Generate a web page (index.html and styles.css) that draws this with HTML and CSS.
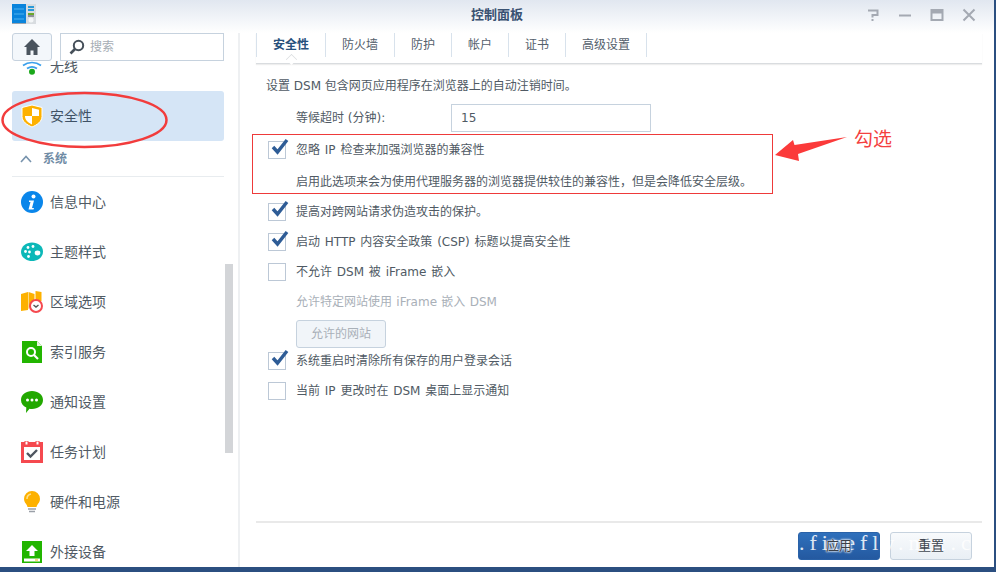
FILE: index.html
```html
<!DOCTYPE html>
<html lang="zh-CN">
<head>
<meta charset="utf-8">
<title>控制面板</title>
<link rel="stylesheet" href="styles.css">
</head>
<body>
<div class="window">
  <header class="titlebar">
    <svg class="logo" width="24" height="20" viewBox="0 0 24 20"><rect width="14" height="19" fill="#0a84dc"/><path d="M2 5h10M2 10h10M2 15h10" stroke="#4fb2ee" stroke-width="1"/><rect x="14" width="10" height="20" fill="#d8dce0"/><rect y="19" width="14" height="1" fill="#9aa4ae"/><rect x="16" y="2" width="6" height="2" fill="#2a9ad8"/><rect x="16" y="5" width="6" height="2" fill="#2a9ad8"/><rect x="16" y="9" width="6" height="2" fill="#6aa82a"/><rect x="16" y="11.500" width="6" height="1" fill="#445"/><circle cx="19" cy="16" r="2.500" fill="#f4f6f8"/></svg>
    <div class="title">控制面板</div>
    <div class="winbtns">
      <svg width="14" height="14" viewBox="0 0 14 14"><path d="M2 2.500h9.500v4.500H6.500v2.500M6.500 11v2" fill="none" stroke="#a4a9b2" stroke-width="2"/></svg>
      <svg width="14" height="14" viewBox="0 0 14 14"><path d="M1 7.500h12" stroke="#a4a9b2" stroke-width="2"/></svg>
      <svg width="14" height="14" viewBox="0 0 14 14"><path d="M1.500 2h11v10h-11z" fill="none" stroke="#a4a9b2" stroke-width="2"/><path d="M1 4h12" stroke="#a4a9b2" stroke-width="3"/></svg>
      <svg width="14" height="14" viewBox="0 0 14 14"><path d="M1.500 1.500l11 11M12.500 1.500l-11 11" stroke="#a4a9b2" stroke-width="2"/></svg>
    </div>
  </header>
  <div class="content">
    <aside class="sidebar">
      <div class="tools">
        <button class="home"><svg width="16" height="16" viewBox="0 0 16 16"><path d="M8 0L0 8h2.500v8h4v-4.500h3V16h4V8H16z" fill="#4a545e"/></svg></button>
        <div class="search"><svg width="16" height="16" viewBox="0 0 16 16"><circle cx="9.500" cy="6.500" r="4.700" fill="none" stroke="#46505a" stroke-width="2"/><path d="M6 10l-4.500 4.500" stroke="#46505a" stroke-width="2.600"/></svg><span>搜索</span></div>
      </div>
      <div class="navclip">
        <nav class="nav">
          <a class="item first"><svg class="ico" width="22" height="22" viewBox="0 0 22 22"><path d="M2 10.500a15 15 0 0 1 18 0M6 13.500a9 9 0 0 1 10 0" fill="none" stroke="#3aa0ec" stroke-width="1.700"/><circle cx="11" cy="16.700" r="3" fill="#1aa81a"/></svg>无线</a>
          <a class="item active"><svg class="ico" width="22" height="24" viewBox="0 0 22 24"><path d="M11 1l10 2.500v9c0 5-5 8.500-10 10.500C6 21 1 17.500 1 12.500v-9z" fill="#fdb100" stroke="#fff" stroke-width="1"/><path d="M11 4l7 1.800V12h-7zM11 12v8.500C7.500 19 4 16 4 12.500V12z" fill="#fff"/></svg>安全性</a>
          <div class="group"><svg width="12" height="8" viewBox="0 0 12 8"><path d="M1 7l5-5.500L11 7" fill="none" stroke="#7793ad" stroke-width="1.600"/></svg>系统</div>
          <a class="item"><svg class="ico" width="22" height="22" viewBox="0 0 22 22"><circle cx="11" cy="11" r="11" fill="#0a86ea"/><circle cx="12.500" cy="5.500" r="2" fill="#fff"/><path d="M8 9.500h5l-2 7.500h2l-.5 1.500h-5l2-7.500H8z" fill="#fff"/></svg>信息中心</a>
          <a class="item"><svg class="ico" width="22" height="22" viewBox="0 0 22 22"><path d="M11 1.500c6 0 11 3.500 11 9 0 6-5.500 9.500-11 9.500S0 16.500 0 11C0 5.500 5 1.500 11 1.500z" fill="#0cb8b8"/><circle cx="7" cy="6.500" r="1.400" fill="#fff"/><circle cx="12" cy="5.500" r="1.400" fill="#fff"/><circle cx="4.500" cy="10.500" r="1.400" fill="#fff"/><circle cx="8.500" cy="11" r="1.400" fill="#fff"/><circle cx="7.500" cy="15.500" r="1.400" fill="#fff"/><ellipse cx="16.500" cy="12" rx="2.800" ry="2.400" fill="#fff"/></svg>主题样式</a>
          <a class="item"><svg class="ico" width="22" height="22" viewBox="0 0 22 22"><path d="M0 3l7-2v18l-7 1zM7.500 1l6 2v6l-6 9zM14.500 0l6 1v9h-6z" fill="#fdb100"/><circle cx="15" cy="15" r="6" fill="#fff" stroke="#f5494f" stroke-width="2"/><path d="M12.500 14l2.500 2 2.500-2" fill="none" stroke="#555" stroke-width="1.400"/></svg>区域选项</a>
          <a class="item"><svg class="ico" width="22" height="22" viewBox="0 0 22 22"><path d="M1 0h15l5 5v17H1z" fill="#22b500"/><path d="M16 0v5h5z" fill="#e6f6e0"/><circle cx="10" cy="11" r="4" fill="none" stroke="#fff" stroke-width="2"/><path d="M13 14l4 4" stroke="#fff" stroke-width="2.200"/></svg>索引服务</a>
          <a class="item"><svg class="ico" width="22" height="22" viewBox="0 0 22 22"><path d="M11 0c6 0 11 3.500 11 9s-5 9-11 9c-1 0-2 0-2.500-.2L5 22l.3-5.500C2 15 0 12.500 0 9 0 3.500 5 0 11 0z" fill="#22a800"/><circle cx="6.500" cy="9" r="1.500" fill="#fff"/><circle cx="11" cy="9" r="1.500" fill="#fff"/><circle cx="15.500" cy="9" r="1.500" fill="#fff"/></svg>通知设置</a>
          <a class="item"><svg class="ico" width="22" height="22" viewBox="0 0 22 22"><rect y="1" width="22" height="21" fill="#f5494f"/><rect x="3" y="6" width="16" height="13" fill="#fff"/><rect x="4" y="0" width="3" height="4" fill="#fff" stroke="#f5494f"/><rect x="15" y="0" width="3" height="4" fill="#fff" stroke="#f5494f"/><path d="M6 12l3.500 3.500L16 9" fill="none" stroke="#4f5660" stroke-width="2.400"/></svg>任务计划</a>
          <a class="item"><svg class="ico" width="22" height="22" viewBox="0 0 22 22"><path d="M11 0a8 8 0 0 1 8 8c0 3-2 4.500-3 6.500-.3.600-.4 1-.4 1.500H6.400c0-.5-.1-.9-.4-1.500C5 12.500 3 11 3 8a8 8 0 0 1 8-8z" fill="#fdb100"/><path d="M6 8a5 5 0 0 1 4-5" fill="none" stroke="#ffe08a" stroke-width="1.500"/><path d="M7 18h8M8 20.500h6" stroke="#9aa0a8" stroke-width="1.500"/></svg>硬件和电源</a>
          <a class="item"><svg class="ico" width="22" height="22" viewBox="0 0 22 22"><rect x="1" width="20" height="22" fill="#22b500"/><path d="M11 4l6 6h-3.500v5h-5v-5H5z" fill="#fff"/><rect x="3" y="17.500" width="16" height="3" fill="#fff"/><rect x="14" y="18.500" width="3" height="1" fill="#fdb100"/></svg>外接设备</a>
        </nav>
        <div class="scrollbar"></div>
      </div>
    </aside>
    <main class="main">
      <div class="tabs">
        <a class="tab on">安全性</a><a class="tab">防火墙</a><a class="tab">防护</a><a class="tab">帐户</a><a class="tab">证书</a><a class="tab">高级设置</a>
      </div>
      <div class="form">
        <p class="line intro">设置 DSM 包含网页应用程序在浏览器上的自动注销时间。</p>
        <div class="timeout"><label>等候超时 (分钟):</label><div class="input">15</div></div>
        <div class="check c1"><i class="box"><svg width="22" height="20" viewBox="0 0 22 20"><path d="M5 9l4.500 5L19 2" fill="none" stroke="#2e5c96" stroke-width="3.400"/></svg></i>忽略 IP 检查来加强浏览器的兼容性</div>
        <p class="line sub hint">启用此选项来会为使用代理服务器的浏览器提供较佳的兼容性，但是会降低安全层级。</p>
        <div class="check c2"><i class="box"><svg width="22" height="20" viewBox="0 0 22 20"><path d="M5 9l4.500 5L19 2" fill="none" stroke="#2e5c96" stroke-width="3.400"/></svg></i>提高对跨网站请求伪造攻击的保护。</div>
        <div class="check c2"><i class="box"><svg width="22" height="20" viewBox="0 0 22 20"><path d="M5 9l4.500 5L19 2" fill="none" stroke="#2e5c96" stroke-width="3.400"/></svg></i>启动 HTTP 内容安全政策 (CSP) 标题以提高安全性</div>
        <div class="check c2"><i class="box"></i>不允许 DSM 被 iFrame 嵌入</div>
        <p class="line sub dim">允许特定网站使用 iFrame 嵌入 DSM</p>
        <button class="allow">允许的网站</button>
        <div class="check c3"><i class="box"><svg width="22" height="20" viewBox="0 0 22 20"><path d="M5 9l4.500 5L19 2" fill="none" stroke="#2e5c96" stroke-width="3.400"/></svg></i>系统重启时清除所有保存的用户登录会话</div>
        <div class="check c2"><i class="box"></i>当前 IP 更改时在 DSM 桌面上显示通知</div>
      </div>
      <footer class="footer">
        <button class="btn primary"><span>应用</span></button>
        <button class="btn"><span>重置</span></button>
      </footer>
    </main>
  </div>
</div>
<svg class="marks" width="996" height="572" viewBox="0 0 996 572">
  <ellipse cx="84.500" cy="120" rx="82" ry="27" fill="none" stroke="#f23c3c" stroke-width="2.500"/>
  <rect x="252.500" y="134.500" width="520" height="59" fill="none" stroke="#ee3a3a" stroke-width="1"/>
  <path d="M775 155l18-15 1.500 5 52.500-8-49 17 1 7z" fill="#fb3a3a"/>
</svg>
<div class="tick">勾选</div>
<div class="wm">.firefly.net.cn</div>
</body>
</html>
```
FILE: styles.css
```css
* { box-sizing: border-box; }
html, body { margin: 0; height: 100%; }
body {
  width: 996px;
  height: 572px;
  overflow: hidden;
  position: relative;
  background: #2b4f80;
  font: 12px/18px "DejaVu Sans", "Noto Sans CJK SC", sans-serif;
  color: #505a64;
}
.window {
  width: 994px;
  height: 567px;
  background: #fff;
  display: flex;
  flex-direction: column;
}
.titlebar {
  height: 33px;
  flex: none;
  display: grid;
  grid-template-columns: 1fr auto 1fr;
  align-items: center;
  padding: 0 18px 0 12px;
  background: linear-gradient(#e1e7f0, #ffffff);
}
.logo { margin-top: -6px; }
.title {
  font-size: 13px;
  font-weight: 700;
  color: #3a5272;
  margin-top: -3px;
  padding-left: 6px;
}
.winbtns { display: flex; gap: 18px; margin-top: -3px; justify-self: end; }
.content { flex: 1; display: flex; min-height: 0; }
.sidebar {
  width: 240px;
  flex: none;
  border-right: 2px solid #eef0f2;
  display: flex;
  flex-direction: column;
  padding-left: 12px;
}
.tools { display: flex; gap: 8px; height: 28px; flex: none; position: relative; z-index: 2; background: #fff; width: 212px; }
.home {
  width: 40px;
  height: 28px;
  padding: 0;
  display: flex;
  align-items: center;
  justify-content: center;
  border: 1px solid #c6d2de;
  border-radius: 3px;
  background: #f3f7fb;
}
.search {
  width: 164px;
  height: 28px;
  display: flex;
  align-items: center;
  gap: 5px;
  padding-left: 8px;
  border: 1px solid #c6d2de;
  color: #a6adb5;
  background: #fff;
}
.navclip { flex: 1; position: relative; overflow: hidden; min-height: 0; }
.nav { width: 212px; margin-top: -20px; }
.item {
  height: 50px;
  display: flex;
  align-items: center;
  gap: 7px;
  padding-left: 9px;
  font-size: 14px;
  color: #505a64;
  border-radius: 3px;
}
.item.active { background: #d5e5f6; color: #3f5266; }
.ico { flex: none; }
.group {
  height: 36px;
  display: flex;
  align-items: center;
  gap: 11px;
  padding: 0 0 0 8px;
  color: #6f8ba5;
  font-weight: 700;
  border-bottom: 1px solid #e8ecef;
}
.scrollbar {
  position: absolute;
  left: 213px;
  top: 203px;
  width: 8px;
  height: 189px;
  background: #d3d5d8;
}
.main {
  flex: 1;
  display: flex;
  flex-direction: column;
  padding: 0 12px 0 16px;
  min-width: 0;
}
.tabs {
  height: 31px;
  flex: none;
  display: flex;
  border-bottom: 1px solid #d9dcdf;
  box-shadow: 0 1px 1px #eee;
}
.tab {
  height: 24px;
  line-height: 24px;
  padding: 0 16px;
  color: #54606c;
  border-right: 1px solid #d8e2ec;
  position: relative;
}
.tab:first-child { border-left: 1px solid #d8e2ec; width: 70px; font-weight: 700; color: #27507c; }
.tab.on::after {
  content: "";
  position: absolute;
  left: 29px;
  bottom: -8px;
  width: 10px;
  height: 10px;
  background: #fff;
  border-left: 1px solid #d9dcdf;
  border-top: 1px solid #d9dcdf;
  transform: rotate(45deg) scale(.72);
}
.form { flex: 1; padding: 0 0 0 10px; }
.line { margin: 0; }
.intro { margin-top: 13px; height: 18px; }
.timeout { display: flex; align-items: center; margin-top: 9px; height: 28px; padding-left: 30px; }
.timeout label { width: 155px; }
.input {
  width: 200px;
  height: 28px;
  border: 1px solid #c6d2de;
  padding-left: 9px;
  line-height: 26px;
}
.check { display: flex; align-items: center; gap: 10px; padding-left: 2px; height: 24px; word-spacing: 1px; }
.box {
  width: 18px;
  height: 18px;
  flex: none;
  position: relative;
  border: 1px solid #bcc8d6;
  background: #fff;
}
.box svg { position: absolute; left: -1px; top: -4px; }
.c1 { margin-top: 6px; }
.c2 { margin-top: 6px; }
.c3 { margin-top: 1px; }
.sub { padding-left: 30px; height: 18px; }
.hint { margin-top: 11px; }
.hint + .c2 { margin-top: 9px; }
.dim { color: #a9b0b8; margin-top: 9px; word-spacing: .5px; }
.allow {
  display: block;
  width: 90px;
  height: 28px;
  margin: 9px 0 0 30px;
  padding: 0;
  font: inherit;
  color: #a9b0b8;
  border: 1px solid #c6d2de;
  border-radius: 3px;
  background: #f1f5f9;
}
.footer {
  height: 46px;
  flex: none;
  display: flex;
  justify-content: flex-end;
  align-items: flex-start;
  gap: 10px;
  padding: 9px 10px 0 0;
  border-top: 2px solid #e9e9e9;
}
.btn {
  width: 82px;
  height: 28px;
  padding: 0;
  font: inherit;
  font-size: 13px;
  color: #3f4650;
  border: 1px solid #c6d2de;
  border-radius: 3px;
  background: linear-gradient(#f8fafc, #e9eff5);
}
.btn span { position: relative; z-index: 3; text-shadow: 0 0 2px #fff; }
.btn.primary { border-color: #2a62a8; background: linear-gradient(#2f70bc, #2459a0); color: #3a3f48; }
.btn.primary span { text-shadow: 0 0 2px #fff, 0 0 2px #fff, 0 0 3px #fff; }
.marks { position: absolute; left: 0; top: 0; pointer-events: none; }
.tick {
  position: absolute;
  left: 854px;
  top: 126px;
  font-size: 19px;
  line-height: 26px;
  color: #f44040;
}
.wm {
  position: absolute;
  z-index: 2;
  left: 799px;
  top: 530px;
  font: 22px/26px "Liberation Serif", serif;
  letter-spacing: 5px;
  color: #fff;
  opacity: .85;
  white-space: nowrap;
}
```
